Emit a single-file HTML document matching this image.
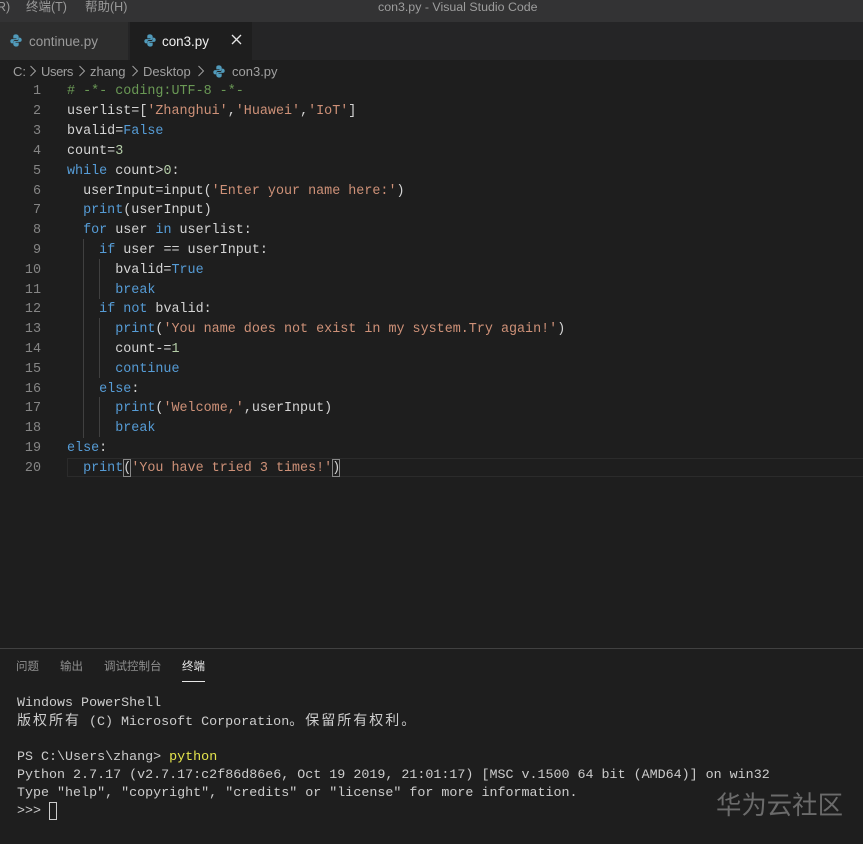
<!DOCTYPE html>
<html>
<head>
<meta charset="utf-8">
<style>
html,body{margin:0;padding:0;background:#1e1e1e;}
#r{position:relative;width:863px;height:844px;overflow:hidden;background:#1e1e1e;font-family:"Liberation Sans","Noto Sans CJK SC",sans-serif;}
.a{position:absolute;white-space:pre;}
.c{position:absolute;left:67px;font-family:"Liberation Mono","Noto Sans CJK SC",monospace;font-size:13.4px;line-height:20px;height:20px;color:#d4d4d4;white-space:pre;}
.n{position:absolute;left:0;width:41px;text-align:right;font-family:"Liberation Mono",monospace;font-size:13.4px;line-height:20px;color:#858585;}
.t{position:absolute;left:17px;font-family:"Liberation Mono","Noto Sans CJK SC",monospace;font-size:13.35px;line-height:18px;color:#cccccc;white-space:pre;}
.t i{font-style:normal;font-size:14px;letter-spacing:2px;line-height:18px;}
.k{color:#569cd6}.s{color:#ce9178}.g{color:#6a9955}.d{color:#b5cea8}
.v{position:absolute;width:1px;background:#404040;}
</style>
</head>
<body>
<div id="r">
<svg width="0" height="0" style="position:absolute"><defs><g id="py"><path d="M6 .4C3.400.4 3.300 1.500 3.300 2.500V4h3.200v.7H2.200C1 4.700.3 5.500.3 6.600S1 8.700 2.200 8.700h1.100V7.300C3.300 6.100 4.200 5.500 5.200 5.500h2c.9 0 1.500-.6 1.500-1.400V2.500C8.700 1.300 7.500.4 6 .4z" fill="#519aba"/><path d="M6 11.600c2.600 0 2.700-1.100 2.700-2.100V8H5.500v-.7h4.300c1.200 0 1.900-.8 1.900-1.900S11 3.300 9.800 3.300H8.700v1.400c0 1.200-.9 1.800-1.900 1.800h-2c-.9 0-1.500.6-1.500 1.400v1.600c0 1.200 1.200 2.100 2.700 2.100z" fill="#519aba"/></g></defs></svg>
<!-- title bar -->
<div class="a" style="left:0;top:0;width:863px;height:22px;background:#333334;"></div>
<div class="a" style="left:-3px;top:-1px;font-size:12.5px;line-height:16px;color:#9a9a9a;">R)</div>
<div class="a" style="left:26px;top:-1px;font-size:12.5px;line-height:16px;color:#9a9a9a;">终端(T)</div>
<div class="a" style="left:85px;top:-1px;font-size:12.5px;line-height:16px;color:#9a9a9a;">帮助(H)</div>
<div class="a" style="left:378px;top:-1px;font-size:12.4px;line-height:16px;color:#9d9d9d;">con3.py - Visual Studio Code</div>
<div class="a" style="left:762px;top:-1px;width:74px;height:1px;background:#6a6a6a;"></div>
<!-- tab bar -->
<div class="a" style="left:0;top:22px;width:863px;height:38px;background:#252526;"></div>
<div class="a" style="left:0;top:22px;width:128px;height:38px;background:#2d2d2d;"></div>
<div class="a" style="left:130px;top:22px;width:122px;height:38px;background:#1e1e1e;"></div>
<svg class="a" style="left:10px;top:34px" width="12" height="13" viewBox="0 0 12 12" preserveAspectRatio="none"><use href="#py"/></svg>
<div class="a" style="left:29px;top:33px;font-size:13.5px;line-height:17px;color:#9b9b9b;">continue.py</div>
<svg class="a" style="left:144px;top:34px" width="12" height="13" viewBox="0 0 12 12" preserveAspectRatio="none"><use href="#py"/></svg>
<div class="a" style="left:162px;top:33px;font-size:13.4px;line-height:17px;color:#f0f0f0;">con3.py</div>
<svg class="a" style="left:231px;top:34px" width="11" height="11" viewBox="0 0 11 11"><path d="M1 1L10 10M10 1L1 10" stroke="#e6e6e6" stroke-width="1.3" fill="none"/></svg>
<!-- breadcrumb -->
<div class="a" style="left:13px;top:63px;font-size:13px;line-height:17px;color:#a0a0a0;">C:</div>
<svg class="a" style="left:29px;top:65px" width="8" height="12" viewBox="0 0 8 12"><path d="M1.500 1L6.500 6L1.500 11" stroke="#a0a0a0" stroke-width="1" fill="none"/></svg>
<div class="a" style="left:41px;top:63px;font-size:13px;letter-spacing:-.4px;line-height:17px;color:#a0a0a0;">Users</div>
<svg class="a" style="left:78px;top:65px" width="8" height="12" viewBox="0 0 8 12"><path d="M1.500 1L6.500 6L1.500 11" stroke="#a0a0a0" stroke-width="1" fill="none"/></svg>
<div class="a" style="left:90px;top:63px;font-size:13px;line-height:17px;color:#a0a0a0;">zhang</div>
<svg class="a" style="left:131px;top:65px" width="8" height="12" viewBox="0 0 8 12"><path d="M1.500 1L6.500 6L1.500 11" stroke="#a0a0a0" stroke-width="1" fill="none"/></svg>
<div class="a" style="left:143px;top:63px;font-size:13px;line-height:17px;color:#a0a0a0;">Desktop</div>
<svg class="a" style="left:197px;top:65px" width="8" height="12" viewBox="0 0 8 12"><path d="M1.500 1L6.500 6L1.500 11" stroke="#a0a0a0" stroke-width="1" fill="none"/></svg>
<svg class="a" style="left:213px;top:65px" width="12" height="13" viewBox="0 0 12 12" preserveAspectRatio="none"><use href="#py"/></svg>
<div class="a" style="left:232px;top:63px;font-size:13px;line-height:17px;color:#a0a0a0;">con3.py</div>
<!-- indent guides -->
<div class="v" style="left:83px;top:239px;height:199px;"></div>
<div class="v" style="left:99px;top:259px;height:40px;"></div>
<div class="v" style="left:99px;top:318px;height:60px;"></div>
<div class="v" style="left:99px;top:397px;height:40px;"></div>
<!-- current line -->
<div class="a" style="left:67px;top:458px;width:796px;height:17px;border:1px solid #2b2b2b;border-right:0;"></div>
<div class="a" style="left:123px;top:459px;width:8px;height:18px;border:1px solid #888;box-sizing:border-box;"></div>
<div class="a" style="left:332px;top:459px;width:8px;height:18px;border:1px solid #888;box-sizing:border-box;"></div>
<!-- line numbers -->
<div class="n" style="top:80px;margin-top:2px">1</div><div class="n" style="top:102px">2</div><div class="n" style="top:122px">3</div><div class="n" style="top:142px">4</div><div class="n" style="top:162px">5</div><div class="n" style="top:182px">6</div><div class="n" style="top:201px">7</div><div class="n" style="top:221px">8</div><div class="n" style="top:241px">9</div><div class="n" style="top:261px">10</div><div class="n" style="top:281px">11</div><div class="n" style="top:300px">12</div><div class="n" style="top:320px">13</div><div class="n" style="top:340px">14</div><div class="n" style="top:360px">15</div><div class="n" style="top:380px">16</div><div class="n" style="top:399px">17</div><div class="n" style="top:419px">18</div><div class="n" style="top:439px">19</div><div class="n" style="top:459px">20</div>
<!-- code -->
<div class="c" style="top:82px"><span class="g"># -*- coding:UTF-8 -*-</span></div>
<div class="c" style="top:102px">userlist=[<span class="s">'Zhanghui'</span>,<span class="s">'Huawei'</span>,<span class="s">'IoT'</span>]</div>
<div class="c" style="top:122px">bvalid=<span class="k">False</span></div>
<div class="c" style="top:142px">count=<span class="d">3</span></div>
<div class="c" style="top:162px"><span class="k">while</span> count&gt;<span class="d">0</span>:</div>
<div class="c" style="top:182px">  userInput=input(<span class="s">'Enter your name here:'</span>)</div>
<div class="c" style="top:201px">  <span class="k">print</span>(userInput)</div>
<div class="c" style="top:221px">  <span class="k">for</span> user <span class="k">in</span> userlist:</div>
<div class="c" style="top:241px">    <span class="k">if</span> user == userInput:</div>
<div class="c" style="top:261px">      bvalid=<span class="k">True</span></div>
<div class="c" style="top:281px">      <span class="k">break</span></div>
<div class="c" style="top:300px">    <span class="k">if</span> <span class="k">not</span> bvalid:</div>
<div class="c" style="top:320px">      <span class="k">print</span>(<span class="s">'You name does not exist in my system.Try again!'</span>)</div>
<div class="c" style="top:340px">      count-=<span class="d">1</span></div>
<div class="c" style="top:360px">      <span class="k">continue</span></div>
<div class="c" style="top:380px">    <span class="k">else</span>:</div>
<div class="c" style="top:399px">      <span class="k">print</span>(<span class="s">'Welcome,'</span>,userInput)</div>
<div class="c" style="top:419px">      <span class="k">break</span></div>
<div class="c" style="top:439px"><span class="k">else</span>:</div>
<div class="c" style="top:459px">  <span class="k">print</span>(<span class="s">'You have tried 3 times!'</span>)</div>
<!-- panel -->
<div class="a" style="left:0;top:648px;width:863px;height:1px;background:#414141;"></div>
<div class="a" style="left:16px;top:659px;font-size:11.5px;line-height:16px;color:#8f8f8f;">问题</div>
<div class="a" style="left:60px;top:659px;font-size:11.5px;line-height:16px;color:#8f8f8f;">输出</div>
<div class="a" style="left:104px;top:659px;font-size:11.5px;line-height:16px;color:#8f8f8f;">调试控制台</div>
<div class="a" style="left:182px;top:659px;font-size:11.5px;line-height:16px;color:#e7e7e7;">终端</div>
<div class="a" style="left:182px;top:681px;width:23px;height:1px;background:#e7e7e7;"></div>
<!-- terminal -->
<div class="t" style="top:695px">Windows PowerShell</div>
<div class="t" style="top:713px"><i>版权所有</i> (C) Microsoft Corporation<i>。保留所有权利。</i></div>
<div class="t" style="top:749px">PS C:\Users\zhang&gt; <span style="color:#e5e54d">python</span></div>
<div class="t" style="top:767px">Python 2.7.17 (v2.7.17:c2f86d86e6, Oct 19 2019, 21:01:17) [MSC v.1500 64 bit (AMD64)] on win32</div>
<div class="t" style="top:785px">Type "help", "copyright", "credits" or "license" for more information.</div>
<div class="t" style="top:803px">&gt;&gt;&gt; </div>
<div class="a" style="left:49px;top:802px;width:8px;height:18px;border:1px solid #cccccc;box-sizing:border-box;"></div>
<!-- watermark -->
<div class="a" style="left:716px;top:790px;font-size:25.4px;line-height:28px;color:#6b6b6b;font-family:'Noto Sans CJK SC',sans-serif;">华为云社区</div>
</div>
</body>
</html>
